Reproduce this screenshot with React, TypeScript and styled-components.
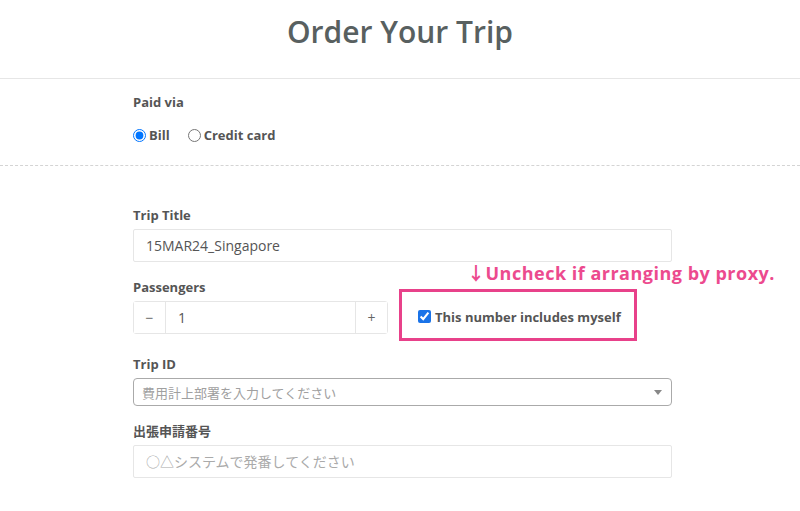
import { styled, createGlobalStyle } from "styled-components";

const GlobalStyle = createGlobalStyle`
  html, body {
    margin: 0;
    padding: 0;
    background: #fff;
  }
  body {
    font-family: "Open Sans", "Noto Sans CJK JP", sans-serif;
    color: #555;
  }
`;

const Header = styled.header`
  height: 78px;
  display: flex;
  justify-content: center;
  border-bottom: 1px solid #e6e6e6;
`;

const Title = styled.h1`
  margin: 12px 0 0;
  font-size: 30px;
  font-weight: 600;
  line-height: 40px;
  color: #586060;
`;

const Section = styled.section<{ $dashed?: boolean }>`
  border-bottom: ${(p) => (p.$dashed ? "1px dashed #d4d4d4" : "none")};
`;

const Inner = styled.div<{ $top: number; $bottom: number }>`
  width: 539px;
  margin-left: 133px;
  padding: ${(p) => p.$top}px 0 ${(p) => p.$bottom}px;
  display: flex;
  flex-direction: column;
`;

const Label = styled.div`
  font-size: 13px;
  font-weight: 700;
  line-height: 18px;
  color: #555;
  margin-bottom: 5px;
`;

const RadioRow = styled.div`
  display: flex;
  gap: 18px;
  margin-top: 10px;
`;

const RadioLabel = styled.label`
  display: flex;
  align-items: center;
  gap: 3px;
  font-size: 13px;
  font-weight: 700;
  color: #555;
  input {
    margin: 0;
    width: 13px;
    height: 13px;
  }
`;

const Field = styled.div`
  display: flex;
  flex-direction: column;
  margin-bottom: 16px;
  position: relative;
`;

const TextInput = styled.input`
  box-sizing: border-box;
  width: 100%;
  height: 33px;
  border: 1px solid #e6e6e6;
  border-radius: 2px;
  padding: 0 12px;
  font-family: "Open Sans", "Noto Sans CJK JP", sans-serif;
  font-size: 14px;
  color: #555;
  outline: none;
  &::placeholder {
    color: #aaa;
  }
`;

const Row = styled.div`
  display: flex;
  align-items: flex-start;
  gap: 11px;
`;

const Stepper = styled.div`
  display: flex;
  width: 255px;
  height: 33px;
  box-sizing: border-box;
  border: 1px solid #e6e6e6;
  border-radius: 3px;
`;

const StepButton = styled.button`
  width: 32px;
  border: none;
  background: #fff;
  color: #666;
  font-size: 14px;
  font-family: "Open Sans", sans-serif;
  padding: 0;
  cursor: pointer;
  &:first-child {
    border-right: 1px solid #e6e6e6;
  }
  &:last-child {
    border-left: 1px solid #e6e6e6;
  }
`;

const StepValue = styled.div`
  flex: 1;
  display: flex;
  align-items: center;
  padding-left: 12px;
  font-size: 14px;
  color: #555;
`;

const Callout = styled.div`
  margin: -12px 0 -2px;
  width: 238px;
  height: 52px;
  box-sizing: border-box;
  border: 3px solid #e8418a;
  display: flex;
  align-items: center;
  padding: 3px 0 0 16px;
`;

const CheckLabel = styled.label`
  display: flex;
  align-items: center;
  gap: 4px;
  font-size: 13px;
  font-weight: 700;
  color: #555;
  input {
    margin: 0;
    width: 13px;
    height: 13px;
    accent-color: #1a73e8;
  }
`;

const Note = styled.div`
  position: absolute;
  left: 334px;
  top: -16px;
  white-space: nowrap;
  font-size: 18px;
  line-height: 22px;
  font-weight: 700;
  letter-spacing: 0.5px;
  color: #ec4a8e;
`;

const SelectBox = styled.div`
  box-sizing: border-box;
  height: 28px;
  border: 1px solid #aaa;
  border-radius: 4px;
  display: flex;
  align-items: center;
  justify-content: space-between;
  padding: 0 8px 0 8px;
  font-size: 13px;
  color: #a0a0a0;
`;

const Arrow = styled.span`
  width: 0;
  height: 0;
  border-left: 4px solid transparent;
  border-right: 4px solid transparent;
  border-top: 5px solid #888;
  margin-right: 1px;
`;

export default function App() {
  return (
    <>
      <GlobalStyle />
      <Header>
        <Title>Order Your Trip</Title>
      </Header>
      <Section $dashed>
        <Inner $top={14} $bottom={21}>
          <Label>Paid via</Label>
          <RadioRow>
            <RadioLabel>
              <input type="radio" name="paid" defaultChecked /> Bill
            </RadioLabel>
            <RadioLabel>
              <input type="radio" name="paid" /> Credit card
            </RadioLabel>
          </RadioRow>
        </Inner>
      </Section>
      <Section>
        <Inner $top={40} $bottom={30}>
          <Field>
            <Label>Trip Title</Label>
            <TextInput defaultValue="15MAR24_Singapore" />
          </Field>
          <Field>
            <Label>Passengers</Label>
            <Row>
              <Stepper>
                <StepButton>−</StepButton>
                <StepValue>1</StepValue>
                <StepButton>+</StepButton>
              </Stepper>
              <Callout>
                <CheckLabel>
                  <input type="checkbox" defaultChecked /> This number includes myself
                </CheckLabel>
              </Callout>
            </Row>
            <Note>↓Uncheck if arranging by proxy.</Note>
          </Field>
          <Field>
            <Label>Trip ID</Label>
            <SelectBox>
              <span>費用計上部署を入力してください</span>
              <Arrow />
            </SelectBox>
          </Field>
          <Field>
            <Label>出張申請番号</Label>
            <TextInput placeholder="○△システムで発番してください" />
          </Field>
        </Inner>
      </Section>
    </>
  );
}
